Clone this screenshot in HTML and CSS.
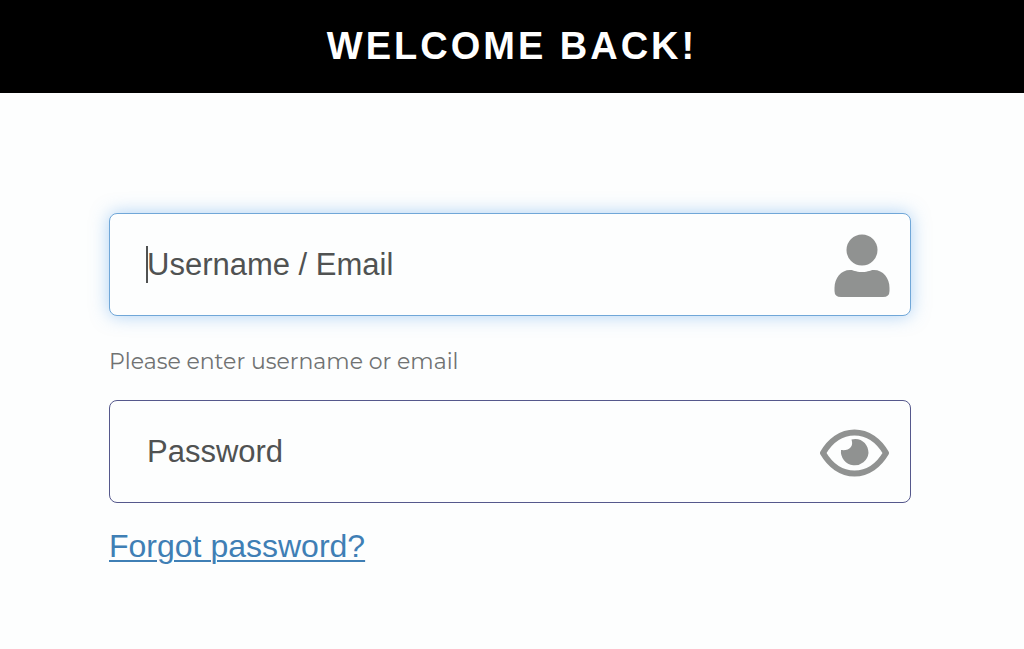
FILE: index.html
```html
<!DOCTYPE html>
<html lang="en">
<head>
    <meta charset="utf-8">
    <title>Login</title>
    <link rel="stylesheet" href="styles.css">
</head>
<body>

<header class="banner">
    <h1>WELCOME BACK!</h1>
</header>

<form class="login">
    <div class="field active">
        <input type="text" id="username" placeholder="Username / Email" aria-label="Username or email" aria-describedby="hint">
        <span class="caret"></span>
        <svg class="icon" width="56" height="64" viewBox="0 0 56 64" aria-hidden="true">
            <circle cx="28" cy="16" r="15.5"/>
            <path d="M16 36C20 36 21 38 28 38S36 36 40 36C49 36 55.500 44 55.500 54V57Q55.500 63 49 63H7Q.5 63 .5 57V54C.5 44 7 36 16 36Z"/>
        </svg>
    </div>
    <p class="hint" id="hint">Please enter username or email</p>
    <div class="field">
        <input type="password" id="password" placeholder="Password" aria-label="Password">
        <svg class="icon" width="70" height="48" viewBox="0 0 70 48" aria-hidden="true">
            <path class="lid" d="M3 24C10 12 21 3.500 34.500 3.500S59 12 66 24C59 36 48 44.500 34.500 44.500S10 36 3 24Z"/>
            <path d="M31.500 10.500C41 8 48.500 15 48.500 24A13.700 13.700 0 0 1 21 21C29 22 34 18 31.500 10.500Z"/>
        </svg>
    </div>
    <a class="forgot" href="#">Forgot password?</a>
</form>

</body>
</html>
```
FILE: styles.css
```css
body {
    margin: 0;
    font-family: "Liberation Sans", Arial, sans-serif;
    background: #fdfefe;
    color: #505252;
}

.banner {
    background: #000;
    color: #fff;
    padding: 24px 0 25px;
    text-align: center;
}

.banner h1 {
    margin: 0;
    font-size: 38px;
    line-height: 44px;
    letter-spacing: 3px;
}

.login {
    padding: 120px 113px 40px 109px;
}

.field {
    position: relative;
    display: flex;
    align-items: center;
    padding: 0 20px 0 37px;
    border: 1px solid #55588c;
    border-radius: 8px;
    background: #fdfefe;
}

.field.active {
    border-color: #70a7d8;
    box-shadow: 0 0 18px rgba(95, 165, 235, 0.5);
}

.field input {
    flex: 1;
    box-sizing: border-box;
    min-width: 0;
    height: 101px;
    padding: 0;
    border: none;
    outline: none;
    background: transparent;
    font-family: inherit;
    font-size: 31px;
    color: #505252;
}

.field input::placeholder {
    color: #505252;
    opacity: 1;
}

/* insertion point at the start of the active field */
.caret {
    position: absolute;
    left: 36px;
    top: 32px;
    width: 2px;
    height: 37px;
    background: #505252;
}

.icon {
    flex: none;
    margin-top: 3px;
    fill: #909291;
}

.icon .lid {
    fill: none;
    stroke: #909291;
    stroke-width: 6;
    stroke-linejoin: round;
}

.hint {
    margin: 30px 0 23px;
    font-family: Montserrat, Inter, sans-serif;
    font-size: 22px;
    line-height: 31px;
    color: #707272;
}

.forgot {
    display: inline-block;
    margin-top: 25px;
    font-size: 32px;
    line-height: 36px;
    color: #3f7fb5;
    text-decoration-thickness: 2px;
    text-underline-offset: 3px;
}
```
